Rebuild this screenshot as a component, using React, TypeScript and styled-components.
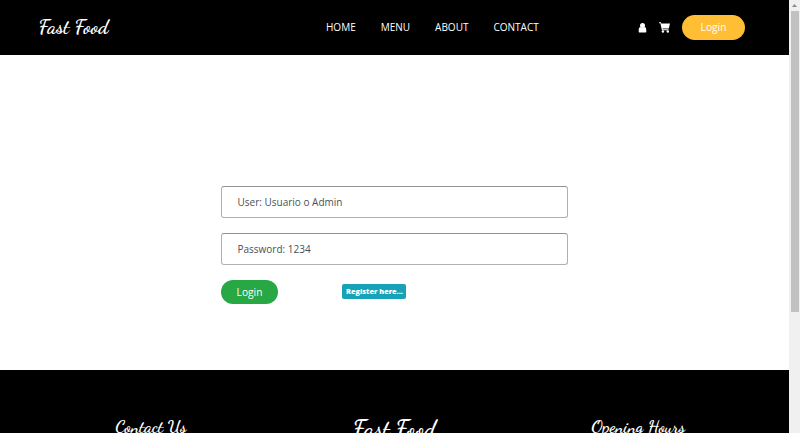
import React from 'react';
import styled, { createGlobalStyle } from 'styled-components';

const GlobalStyle = createGlobalStyle`
  * { box-sizing: border-box; }
  html, body { margin: 0; height: 100%; overflow: hidden; }
  body { font-family: "Open Sans", sans-serif; background: #fff; }
`;

const Window = styled.div`
  display: grid;
  grid-template-columns: 789px 11px;
  height: 433px;
  overflow: hidden;
`;

const Page = styled.div`
  display: flex;
  flex-direction: column;
  height: 433px;
  overflow: hidden;
`;

const Header = styled.header`
  display: grid;
  grid-template-columns: 287.5px 1fr auto;
  align-items: center;
  flex: none;
  height: 55px;
  padding: 0 44px 0 38.5px;
  background: #000;
  color: #fff;
`;

const Script = styled.span<{ $size: number; $lift?: number }>`
  font-family: "Dancing Script", "Liberation Serif", cursive;
  font-size: ${(p) => p.$size}px;
  line-height: 26px;
  margin-top: ${(p) => -(p.$lift ?? 0)}px;
  font-weight: 700;
  color: #fff;
  white-space: nowrap;
`;

const Nav = styled.nav`
  display: flex;
  gap: 25px;
`;

const NavLink = styled.a`
  font-size: 10px;
  line-height: 16px;
  padding-bottom: 1px;
  color: #fff;
`;

const Actions = styled.div`
  display: flex;
  align-items: center;

  svg { display: block; fill: #fff; }
  svg + svg { margin: 0 12px 0 12px; }
`;

const Pill = styled.button<{ $tone: string; $width: number; $height: number }>`
  width: ${(p) => p.$width}px;
  height: ${(p) => p.$height}px;
  padding: 0 0 1px;
  border: 0;
  border-radius: 16px;
  background: ${(p) => p.$tone};
  color: #fff;
  font: 10.2px/16px "Open Sans", sans-serif;
`;

const Main = styled.main`
  flex: none;
  height: 315px;
  padding: 131px 221px 0;
`;

const Form = styled.form`
  display: flex;
  flex-direction: column;
`;

const Field = styled.input`
  width: 347px;
  height: 32px;
  margin-bottom: 15px;
  padding: 0 15.5px;
  border: 1px solid #b0b0b0;
  border-top-color: #929292;
  border-radius: 3px;
  font: 10px "Open Sans", sans-serif;
  background: #fff;

  &::placeholder { color: #495057; opacity: 1; }
`;

const FormActions = styled.div`
  display: flex;
  align-items: center;
  gap: 64px;
`;

const Badge = styled.a`
  width: 64px;
  height: 15px;
  margin-bottom: 1px;
  padding-left: 1px;
  border-radius: 2px;
  background: #17a2b8;
  color: #fff;
  text-align: center;
  font-size: 7.3px;
  font-weight: 800;
  line-height: 15px;
  white-space: nowrap;
`;

const Footer = styled.footer`
  display: grid;
  grid-template-columns: repeat(3, 1fr);
  flex: none;
  height: 63px;
  padding: 45px 29px 0;
  background: #000;
  overflow: hidden;
  text-align: center;
`;

const Scrollbar = styled.div`
  display: flex;
  flex-direction: column;
  align-items: center;
  background: #f0f0f0;

  svg { display: block; flex: none; }
`;

const Thumb = styled.div`
  width: 8px;
  height: 301px;
  background: #c1c1c1;
`;

const UserIcon = () => (
  <svg width="9" height="10" viewBox="0 0 9 10">
    <circle cx="4.5" cy="2.6" r="2.5" />
    <path d="M2.2 4C1 4.6.7 5.9.7 7.2v1.3c0 .7.4 1 1 1h5.6c.6 0 1-.3 1-1V7.2c0-1.3-.3-2.6-1.5-3.2-1.2 1-3.4 1-4.6 0Z" />
  </svg>
);

const CartIcon = () => (
  <svg width="11" height="11" viewBox="0 0 11 11">
    <path d="M0 .3h2l.3 1.2H11L9.8 6.5H3.5l.2.8h5.8v.9H2.9L1.4 1.2H0Z" />
    <circle cx="3.9" cy="9.5" r="1.2" />
    <circle cx="8.8" cy="9.5" r="1.2" />
  </svg>
);

export default function App() {
  return (
    <Window>
      <GlobalStyle />
      <Page>
        <Header>
          <Script $size={20} $lift={1}>Fast Food</Script>
          <Nav>
            {['HOME', 'MENU', 'ABOUT', 'CONTACT'].map((label) => (
              <NavLink key={label}>{label}</NavLink>
            ))}
          </Nav>
          <Actions>
            <UserIcon />
            <CartIcon />
            <Pill $tone="#ffbe33" $width={63} $height={25}>Login</Pill>
          </Actions>
        </Header>
        <Main>
          <Form>
            <Field placeholder="User: Usuario o Admin" />
            <Field placeholder="Password: 1234" />
            <FormActions>
              <Pill type="button" $tone="#28a745" $width={57} $height={24}>Login</Pill>
              <Badge>Register here...</Badge>
            </FormActions>
          </Form>
        </Main>
        <Footer>
          <Script $size={17.5} $lift={1}>Contact Us</Script>
          <Script $size={23.8} $lift={-2}>Fast Food</Script>
          <Script $size={17.3} $lift={1}>Opening Hours</Script>
        </Footer>
      </Page>
      <Scrollbar>
        <svg width="11" height="11" viewBox="0 0 11 11">
          <path d="M3 7 5.5 4 8 7Z" fill="#8a8a8a" />
        </svg>
        <Thumb />
      </Scrollbar>
    </Window>
  );
}
